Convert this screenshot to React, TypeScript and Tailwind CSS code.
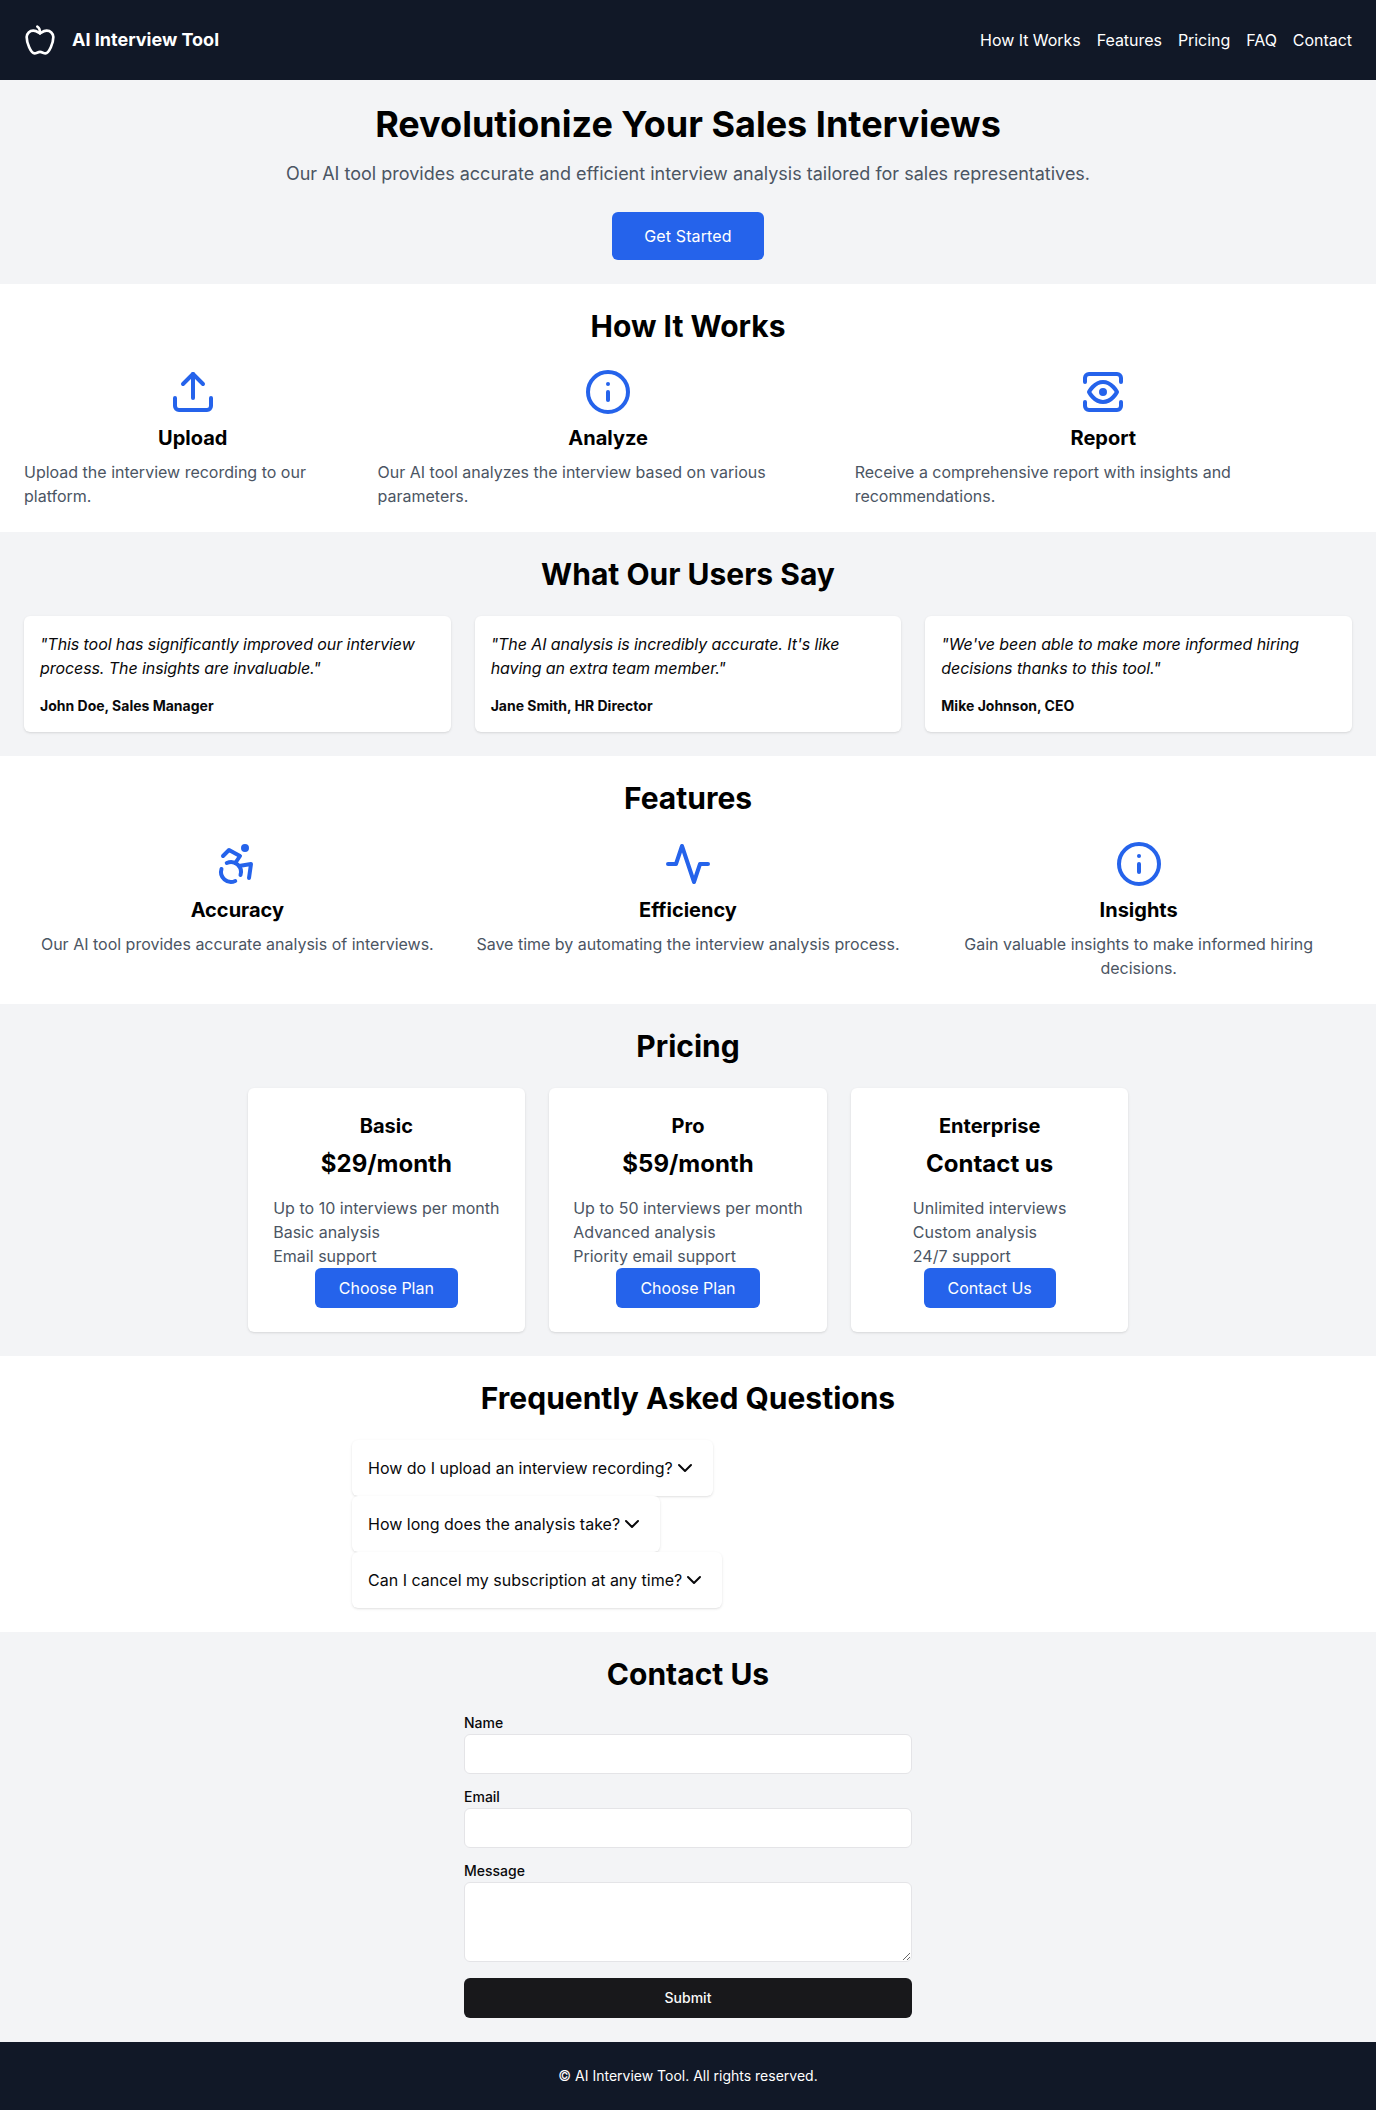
import type { ReactNode } from "react";

type IconProps = { className?: string; children: ReactNode };

function Icon({ className, children }: IconProps) {
  return (
    <svg
      viewBox="0 0 24 24"
      fill="none"
      stroke="currentColor"
      strokeWidth="2"
      strokeLinecap="round"
      strokeLinejoin="round"
      className={className}
    >
      {children}
    </svg>
  );
}

const blueIcon = "h-12 w-12 text-[#2563eb]";

const AppleIcon = () => (
  <Icon className="h-8 w-8">
    <path d="M12 20.94c1.5 0 2.75 1.06 4 1.06 3 0 6-8 6-12.22A4.91 4.91 0 0 0 17 5c-2.22 0-4 1.44-5 2-1-.56-2.78-2-5-2a4.9 4.9 0 0 0-5 4.78C2 14 5 22 8 22c1.25 0 2.5-1.06 4-1.06Z" />
    <path d="M10 2c1 .5 2 2 2 5" />
  </Icon>
);

const UploadIcon = () => (
  <Icon className={blueIcon}>
    <path d="M21 15v4a2 2 0 0 1-2 2H5a2 2 0 0 1-2-2v-4" />
    <polyline points="17 8 12 3 7 8" />
    <line x1="12" x2="12" y1="3" y2="15" />
  </Icon>
);

const InfoIcon = () => (
  <Icon className={blueIcon}>
    <circle cx="12" cy="12" r="10" />
    <path d="M12 16v-4" />
    <path d="M12 8h.01" />
  </Icon>
);

const ViewIcon = () => (
  <Icon className={blueIcon}>
    <path d="M5 12s2.545-5 7-5c4.454 0 7 5 7 5s-2.546 5-7 5c-4.455 0-7-5-7-5z" />
    <path d="M12 13a1 1 0 1 0 0-2 1 1 0 0 0 0 2z" />
    <path d="M21 17v2a2 2 0 0 1-2 2H5a2 2 0 0 1-2-2v-2" />
    <path d="M21 7V5a2 2 0 0 0-2-2H5a2 2 0 0 0-2 2v2" />
  </Icon>
);

const AccessibilityIcon = () => (
  <Icon className={blueIcon}>
    <circle cx="16" cy="4" r="1" />
    <path d="m18 19 1-7-6 1" />
    <path d="m5 8 3-3 5.5 3-2.36 3.5" />
    <path d="M4.24 14.5a5 5 0 0 0 6.88 6" />
    <path d="M13.76 17.5a5 5 0 0 0-6.88-6" />
  </Icon>
);

const ActivityIcon = () => (
  <Icon className={blueIcon}>
    <path d="M22 12h-4l-3 9L9 3l-3 9H2" />
  </Icon>
);

const ChevronDownIcon = () => (
  <Icon className="h-6 w-6">
    <path d="m6 9 6 6 6-6" />
  </Icon>
);

const navLinks = ["How It Works", "Features", "Pricing", "FAQ", "Contact"];

const steps = [
  { icon: <UploadIcon />, title: "Upload", text: "Upload the interview recording to our platform." },
  { icon: <InfoIcon />, title: "Analyze", text: "Our AI tool analyzes the interview based on various parameters." },
  { icon: <ViewIcon />, title: "Report", text: "Receive a comprehensive report with insights and recommendations." },
];

const testimonials = [
  {
    quote: "\"This tool has significantly improved our interview process. The insights are invaluable.\"",
    author: "John Doe, Sales Manager",
  },
  {
    quote: "\"The AI analysis is incredibly accurate. It's like having an extra team member.\"",
    author: "Jane Smith, HR Director",
  },
  {
    quote: "\"We've been able to make more informed hiring decisions thanks to this tool.\"",
    author: "Mike Johnson, CEO",
  },
];

const features = [
  { icon: <AccessibilityIcon />, title: "Accuracy", text: "Our AI tool provides accurate analysis of interviews." },
  { icon: <ActivityIcon />, title: "Efficiency", text: "Save time by automating the interview analysis process." },
  { icon: <InfoIcon />, title: "Insights", text: "Gain valuable insights to make informed hiring decisions." },
];

const plans = [
  {
    name: "Basic",
    price: "$29/month",
    items: ["Up to 10 interviews per month", "Basic analysis", "Email support"],
    action: "Choose Plan",
  },
  {
    name: "Pro",
    price: "$59/month",
    items: ["Up to 50 interviews per month", "Advanced analysis", "Priority email support"],
    action: "Choose Plan",
  },
  {
    name: "Enterprise",
    price: "Contact us",
    items: ["Unlimited interviews", "Custom analysis", "24/7 support"],
    action: "Contact Us",
  },
];

const questions = [
  "How do I upload an interview recording?",
  "How long does the analysis take?",
  "Can I cancel my subscription at any time?",
];

function Section({ title, gray, children }: { title: string; gray?: boolean; children: ReactNode }) {
  return (
    <section className={gray ? "bg-[#f3f4f6] p-6" : "bg-white p-6"}>
      <h2 className="mb-6 text-center text-3xl font-bold text-black">{title}</h2>
      {children}
    </section>
  );
}

function Field({ label, children }: { label: string; children: ReactNode }) {
  return (
    <label className="flex flex-col gap-1">
      <span className="text-sm leading-none font-medium">{label}</span>
      {children}
    </label>
  );
}

export default function App() {
  return (
    <div className="bg-white font-['Inter',sans-serif] text-[#09090b]">
      <header className="flex items-center justify-between bg-[#111827] p-6 text-white">
        <div className="flex items-center gap-4">
          <AppleIcon />
          <h1 className="text-lg font-bold">AI Interview Tool</h1>
        </div>
        <nav className="flex gap-4 tracking-[-0.04px]">
          {navLinks.map((link) => (
            <a key={link} href="#">
              {link}
            </a>
          ))}
        </nav>
      </header>

      <section className="flex flex-col items-center bg-[#f3f4f6] p-6 text-center">
        <h2 className="text-4xl font-bold text-black">Revolutionize Your Sales Interviews</h2>
        <p className="mt-4 text-lg text-[#4b5563]">
          Our AI tool provides accurate and efficient interview analysis tailored for sales representatives.
        </p>
        <button className="mt-6 rounded-md bg-[#2563eb] px-8 py-3 tracking-[0.12px] text-white">Get Started</button>
      </section>

      <Section title="How It Works">
        <div className="flex justify-between gap-4">
          {steps.map((step) => (
            <div key={step.title} className="flex flex-col items-center">
              {step.icon}
              <h3 className="mt-2 text-xl font-bold text-black">{step.title}</h3>
              <p className="mt-2 text-[#4b5563]">{step.text}</p>
            </div>
          ))}
        </div>
      </Section>

      <Section title="What Our Users Say" gray>
        <div className="grid grid-cols-3 gap-6">
          {testimonials.map((item) => (
            <div key={item.author} className="rounded-md bg-white p-4 shadow-sm">
              <p className="tracking-[-0.08px] italic">{item.quote}</p>
              <p className="mt-4 text-sm font-bold">{item.author}</p>
            </div>
          ))}
        </div>
      </Section>

      <Section title="Features">
        <div className="grid grid-cols-3 gap-6">
          {features.map((feature) => (
            <div key={feature.title} className="flex flex-col items-center text-center">
              {feature.icon}
              <h3 className="mt-2 text-xl font-bold text-black">{feature.title}</h3>
              <p className="mt-2 text-[#4b5563]">{feature.text}</p>
            </div>
          ))}
        </div>
      </Section>

      <Section title="Pricing" gray>
        <div className="flex justify-center">
          <div className="grid grid-cols-3 gap-6">
            {plans.map((plan) => (
              <div key={plan.name} className="flex flex-col items-center rounded-md bg-white p-6 shadow-sm">
                <h3 className="text-xl font-bold text-black">{plan.name}</h3>
                <p className="mt-2 text-2xl font-bold text-black">{plan.price}</p>
                <ul className="mt-4 tracking-[0.02px] text-[#4b5563]">
                  {plan.items.map((item) => (
                    <li key={item}>{item}</li>
                  ))}
                </ul>
                <button className="rounded-md bg-[#2563eb] px-6 py-2 text-white">{plan.action}</button>
              </div>
            ))}
          </div>
        </div>
      </Section>

      <Section title="Frequently Asked Questions">
        <div className="mx-auto flex max-w-2xl flex-col items-start">
          {questions.map((question) => (
            <button key={question} className="flex items-center rounded-md bg-white p-4 shadow-sm">
              {question}
              <ChevronDownIcon />
            </button>
          ))}
        </div>
      </Section>

      <Section title="Contact Us" gray>
        <form className="mx-auto flex max-w-md flex-col gap-4">
          <Field label="Name">
            <input className="h-10 rounded-md border border-[#e4e4e7] bg-white px-3 text-sm" />
          </Field>
          <Field label="Email">
            <input type="email" className="h-10 rounded-md border border-[#e4e4e7] bg-white px-3 text-sm" />
          </Field>
          <Field label="Message">
            <textarea className="h-20 rounded-md border border-[#e4e4e7] bg-white px-3 py-2 text-sm" />
          </Field>
          <button type="button" className="h-10 rounded-md bg-[#18181b] text-sm font-medium text-[#fafafa]">
            Submit
          </button>
        </form>
      </Section>

      <footer className="bg-[#111827] p-6 text-center text-sm text-white">
        © AI Interview Tool. All rights reserved.
      </footer>
    </div>
  );
}
